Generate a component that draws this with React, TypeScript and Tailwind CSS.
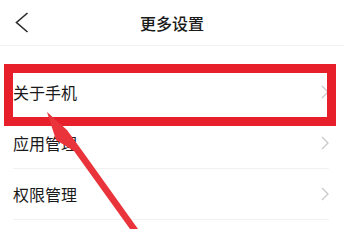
import React from "react";

const ROWS = ["关于手机", "应用管理", "权限管理", ""];

const Chevron: React.FC = () => (
  <svg width="8" height="14" viewBox="0 0 8 14" fill="none">
    <path d="M1 1 L7 7 L1 13" stroke="#c9c9c9" strokeWidth="1.3" />
  </svg>
);

export default function App() {
  return (
    <div
      className="relative w-[344px] h-[229px] overflow-hidden bg-white text-[#1a1a1a]"
      style={{ fontFamily: '"Noto Sans CJK SC", "Noto Sans", sans-serif' }}
    >
      {/* HEADER */}
      <div className="grid grid-cols-[60px_1fr_60px] items-center h-[46px] border-b border-[#f2f2f2]">
        <div className="pl-[15px] flex items-center">
          <svg width="14" height="22" viewBox="0 0 14 22" fill="none">
            <path d="M12.5 1 L1.5 10.5 L12.5 20" stroke="#2a2a2a" strokeWidth="1.6" />
          </svg>
        </div>
        <div className="text-center text-[16px] leading-none font-medium">更多设置</div>
        <div />
      </div>

      {/* LIST */}
      <div className="mt-[21px] pl-[13px] pr-[15px]">
        {ROWS.map((r, i) => (
          <div
            key={i}
            className="flex items-center justify-between h-[51px] border-b border-[#f1f1f1]"
          >
            <span className="text-[16px] leading-none">{r}</span>
            {r && <Chevron />}
          </div>
        ))}
      </div>

      {/* ANNOTATION */}
      <div className="absolute left-[4px] top-[64px] w-[332px] h-[62px] border-[9px] border-[#e61f2a]" />
      <svg className="absolute left-0 top-0" width="344" height="229" viewBox="0 0 344 229">
        <polygon
          points="47,112 67,130 83,152 138,229 130,229 74,151 56,140"
          fill="#e8343a"
        />
      </svg>
    </div>
  );
}
